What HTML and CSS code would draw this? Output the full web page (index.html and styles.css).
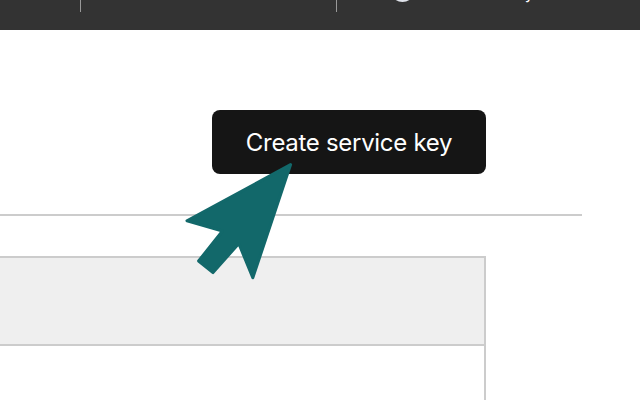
FILE: index.html
```html
<!DOCTYPE html>
<html lang="en">
<head>
<meta charset="utf-8">
<title>Service keys</title>
<link rel="stylesheet" href="styles.css">
</head>
<body>
<header class="topbar">
  <div class="nav">
    <span class="nav-sep nav-sep-first"></span>
    <span class="nav-text nav-text-first">Ap</span>
    <span class="nav-sep nav-sep-second"></span>
    <span class="nav-avatar"></span>
    <span class="nav-text nav-text-last">y</span>
  </div>
</header>
<main class="page">
  <div class="actions">
    <button class="primary" type="button">Create service key</button>
  </div>
  <hr class="rule">
  <div class="table">
    <div class="table-head"></div>
  </div>
</main>
<svg class="pointer" viewBox="0 0 640 400" width="640" height="400" aria-hidden="true">
  <path d="M290.6 164.6 L187 220.7 L222.5 231 L198.6 261 L213 272.6 L238.8 243.5 L252.8 277.8 Z" fill="#12686a" stroke="#12686a" stroke-width="3" stroke-linejoin="round"/>
</svg>
</body>
</html>
```
FILE: styles.css
```css
* { box-sizing: border-box; }
html, body { margin: 0; padding: 0; }
body {
  width: 640px;
  height: 400px;
  overflow: hidden;
  position: relative;
  background: #fff;
  font-family: "Inter", "Open Sans", sans-serif;
}
.topbar {
  height: 30px;
  background: #333;
  overflow: hidden;
}
.nav {
  display: flex;
  height: 12px;
  align-items: flex-start;
}
.nav-sep { width: 1px; height: 12px; background: #999; flex: none; }
.nav-sep-first { margin-left: 80px; }
.nav-sep-second { margin-left: 179px; }
.nav-text { color: #fff; font-size: 16px; line-height: 16px; margin-top: -17px; flex: none; }
.nav-text-first { margin-left: 55px; }
.nav-avatar {
  width: 25px; height: 25px; border-radius: 50%;
  background: #dfe3ea; margin: -23px 0 0 53px; flex: none;
}
.nav-text-last { margin-left: 110px; margin-top: -15px; }
.page { padding: 80px 58px 0 0; }
.actions { display: flex; padding-right: 96px; justify-content: flex-end; }
.primary {
  width: 274px;
  height: 64px;
  border: 0;
  border-radius: 8px;
  background: #151515;
  color: #fff;
  font: 400 24px "Inter", sans-serif;
  letter-spacing: -0.3px;
  padding: 0;
}
.rule { border: 0; height: 2px; background: #ccc; margin: 40px 0 0; }
.table {
  margin: 40px 96px 0 0;
  border: 2px solid #ccc;
  border-left: 0;
  border-bottom: 0;
  height: 144px;
}
.table-head { height: 88px; background: #efefef; border-bottom: 2px solid #ccc; }
.pointer { position: absolute; left: 0; top: 0; pointer-events: none; }
```
